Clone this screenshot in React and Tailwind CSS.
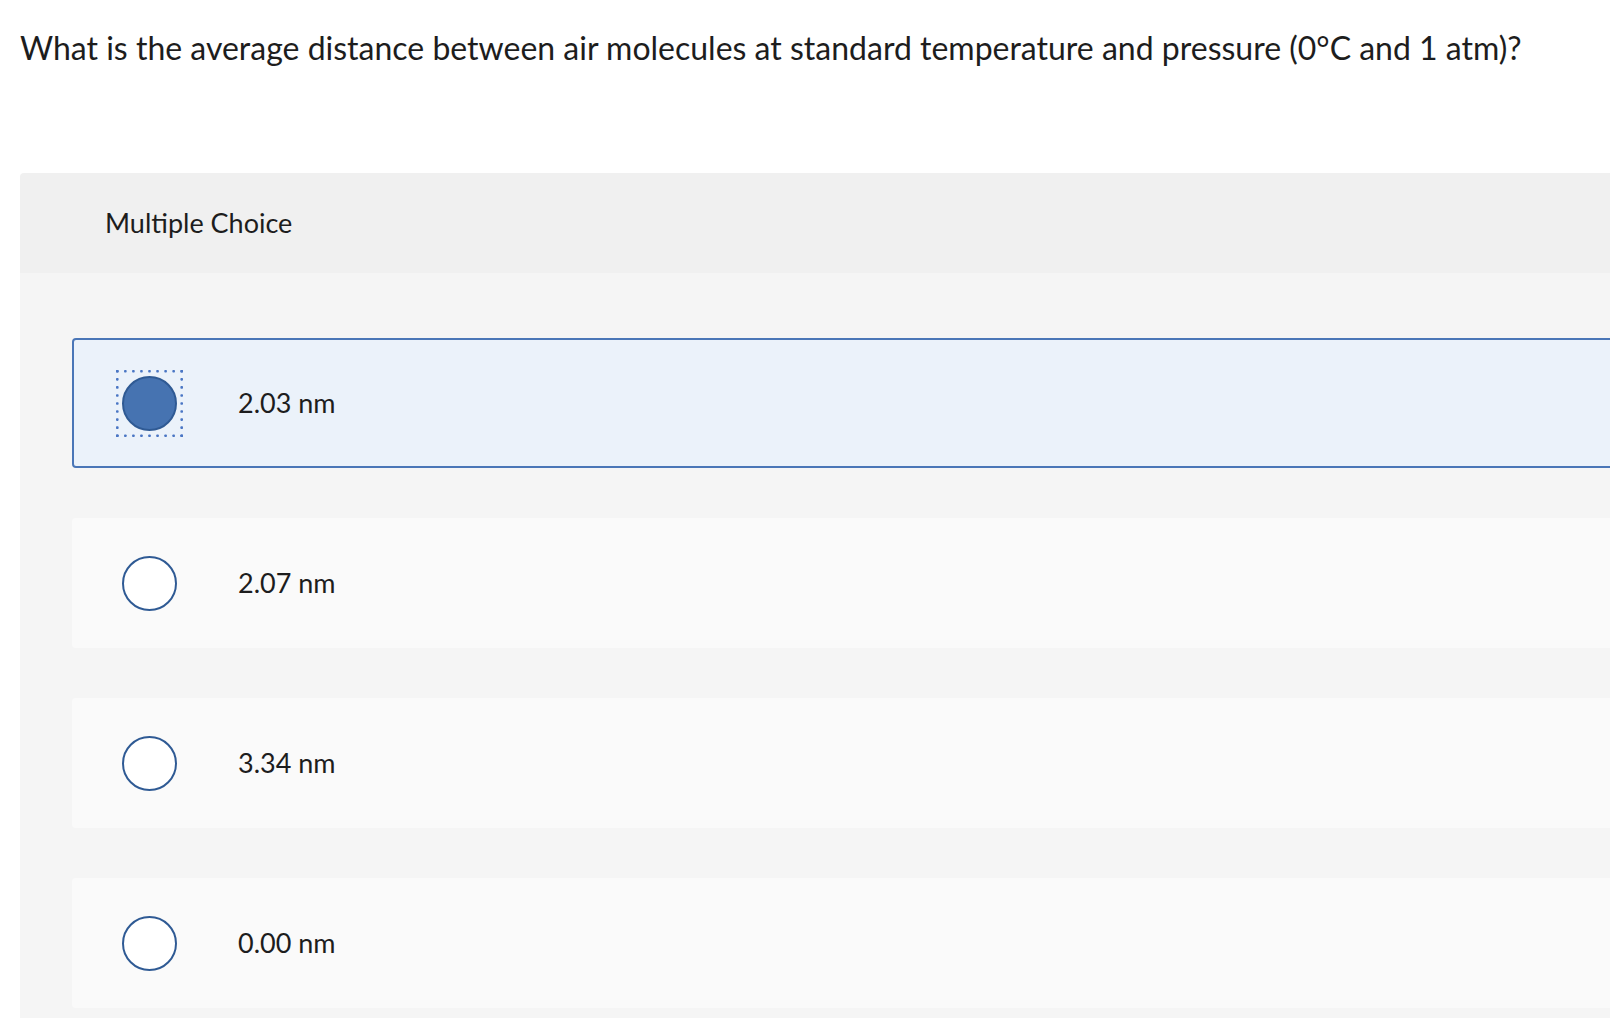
import React from "react";

const options = [
  { label: "2.03 nm", selected: true },
  { label: "2.07 nm", selected: false },
  { label: "3.34 nm", selected: false },
  { label: "0.00 nm", selected: false },
];

function FocusDots() {
  const dots = [];
  const step = 8.05;
  for (let i = 0; i < 9; i++) {
    const p = i * step;
    dots.push([p, 0], [p, 64.4], [0, p], [64.4, p]);
  }
  return (
    <svg className="absolute inset-0" width="67" height="67" viewBox="0 0 67 67">
      {dots.map(([x, y], i) => (
        <rect key={i} x={x} y={y} width="2.6" height="2.6" rx="0.8" fill="#4a76c4" />
      ))}
    </svg>
  );
}

function Radio({ selected }) {
  if (selected) {
    return (
      <div className="relative w-[67px] h-[67px] shrink-0 -mx-[6px] flex items-center justify-center">
        <FocusDots />
        <div className="w-[55px] h-[55px] rounded-full bg-[#4673b1] border-2 border-[#2f5a94]" />
      </div>
    );
  }
  return (
    <div className="w-[55px] h-[55px] shrink-0 rounded-full bg-white border-2 border-[#2f5a94]" />
  );
}

export default function App() {
  return (
    <div
      className="w-full h-screen overflow-hidden bg-white text-[#1d1d1d]"
      style={{ fontFamily: "Lato, 'Liberation Sans', sans-serif" }}
    >
      <h1 className="pl-[20px] pt-[29px] text-[32px] leading-[38px] font-normal whitespace-nowrap">
        What is the average distance between air molecules at standard temperature and pressure (0°C and 1 atm)?
      </h1>
      <div className="ml-[20px] -mr-[100px] mt-[106px] rounded-tl-[4px] overflow-hidden">
        <div className="h-[100px] bg-[#f0f0f0] flex items-center pl-[85px] text-[27px]">
          Multiple Choice
        </div>
        <div className="bg-[#f5f5f5] pt-[65px] pl-[52px] pb-[60px] flex flex-col gap-[50px]">
          {options.map((o) => (
            <div
              key={o.label}
              className={
                "h-[130px] rounded-[4px] border-2 flex items-center pl-[48px] " +
                (o.selected
                  ? "bg-[#ebf2fa] border-[#4a76b7]"
                  : "bg-[#fafafa] border-transparent")
              }
            >
              <Radio selected={o.selected} />
              <span className="ml-[61px] text-[27px]">{o.label}</span>
            </div>
          ))}
        </div>
      </div>
    </div>
  );
}
